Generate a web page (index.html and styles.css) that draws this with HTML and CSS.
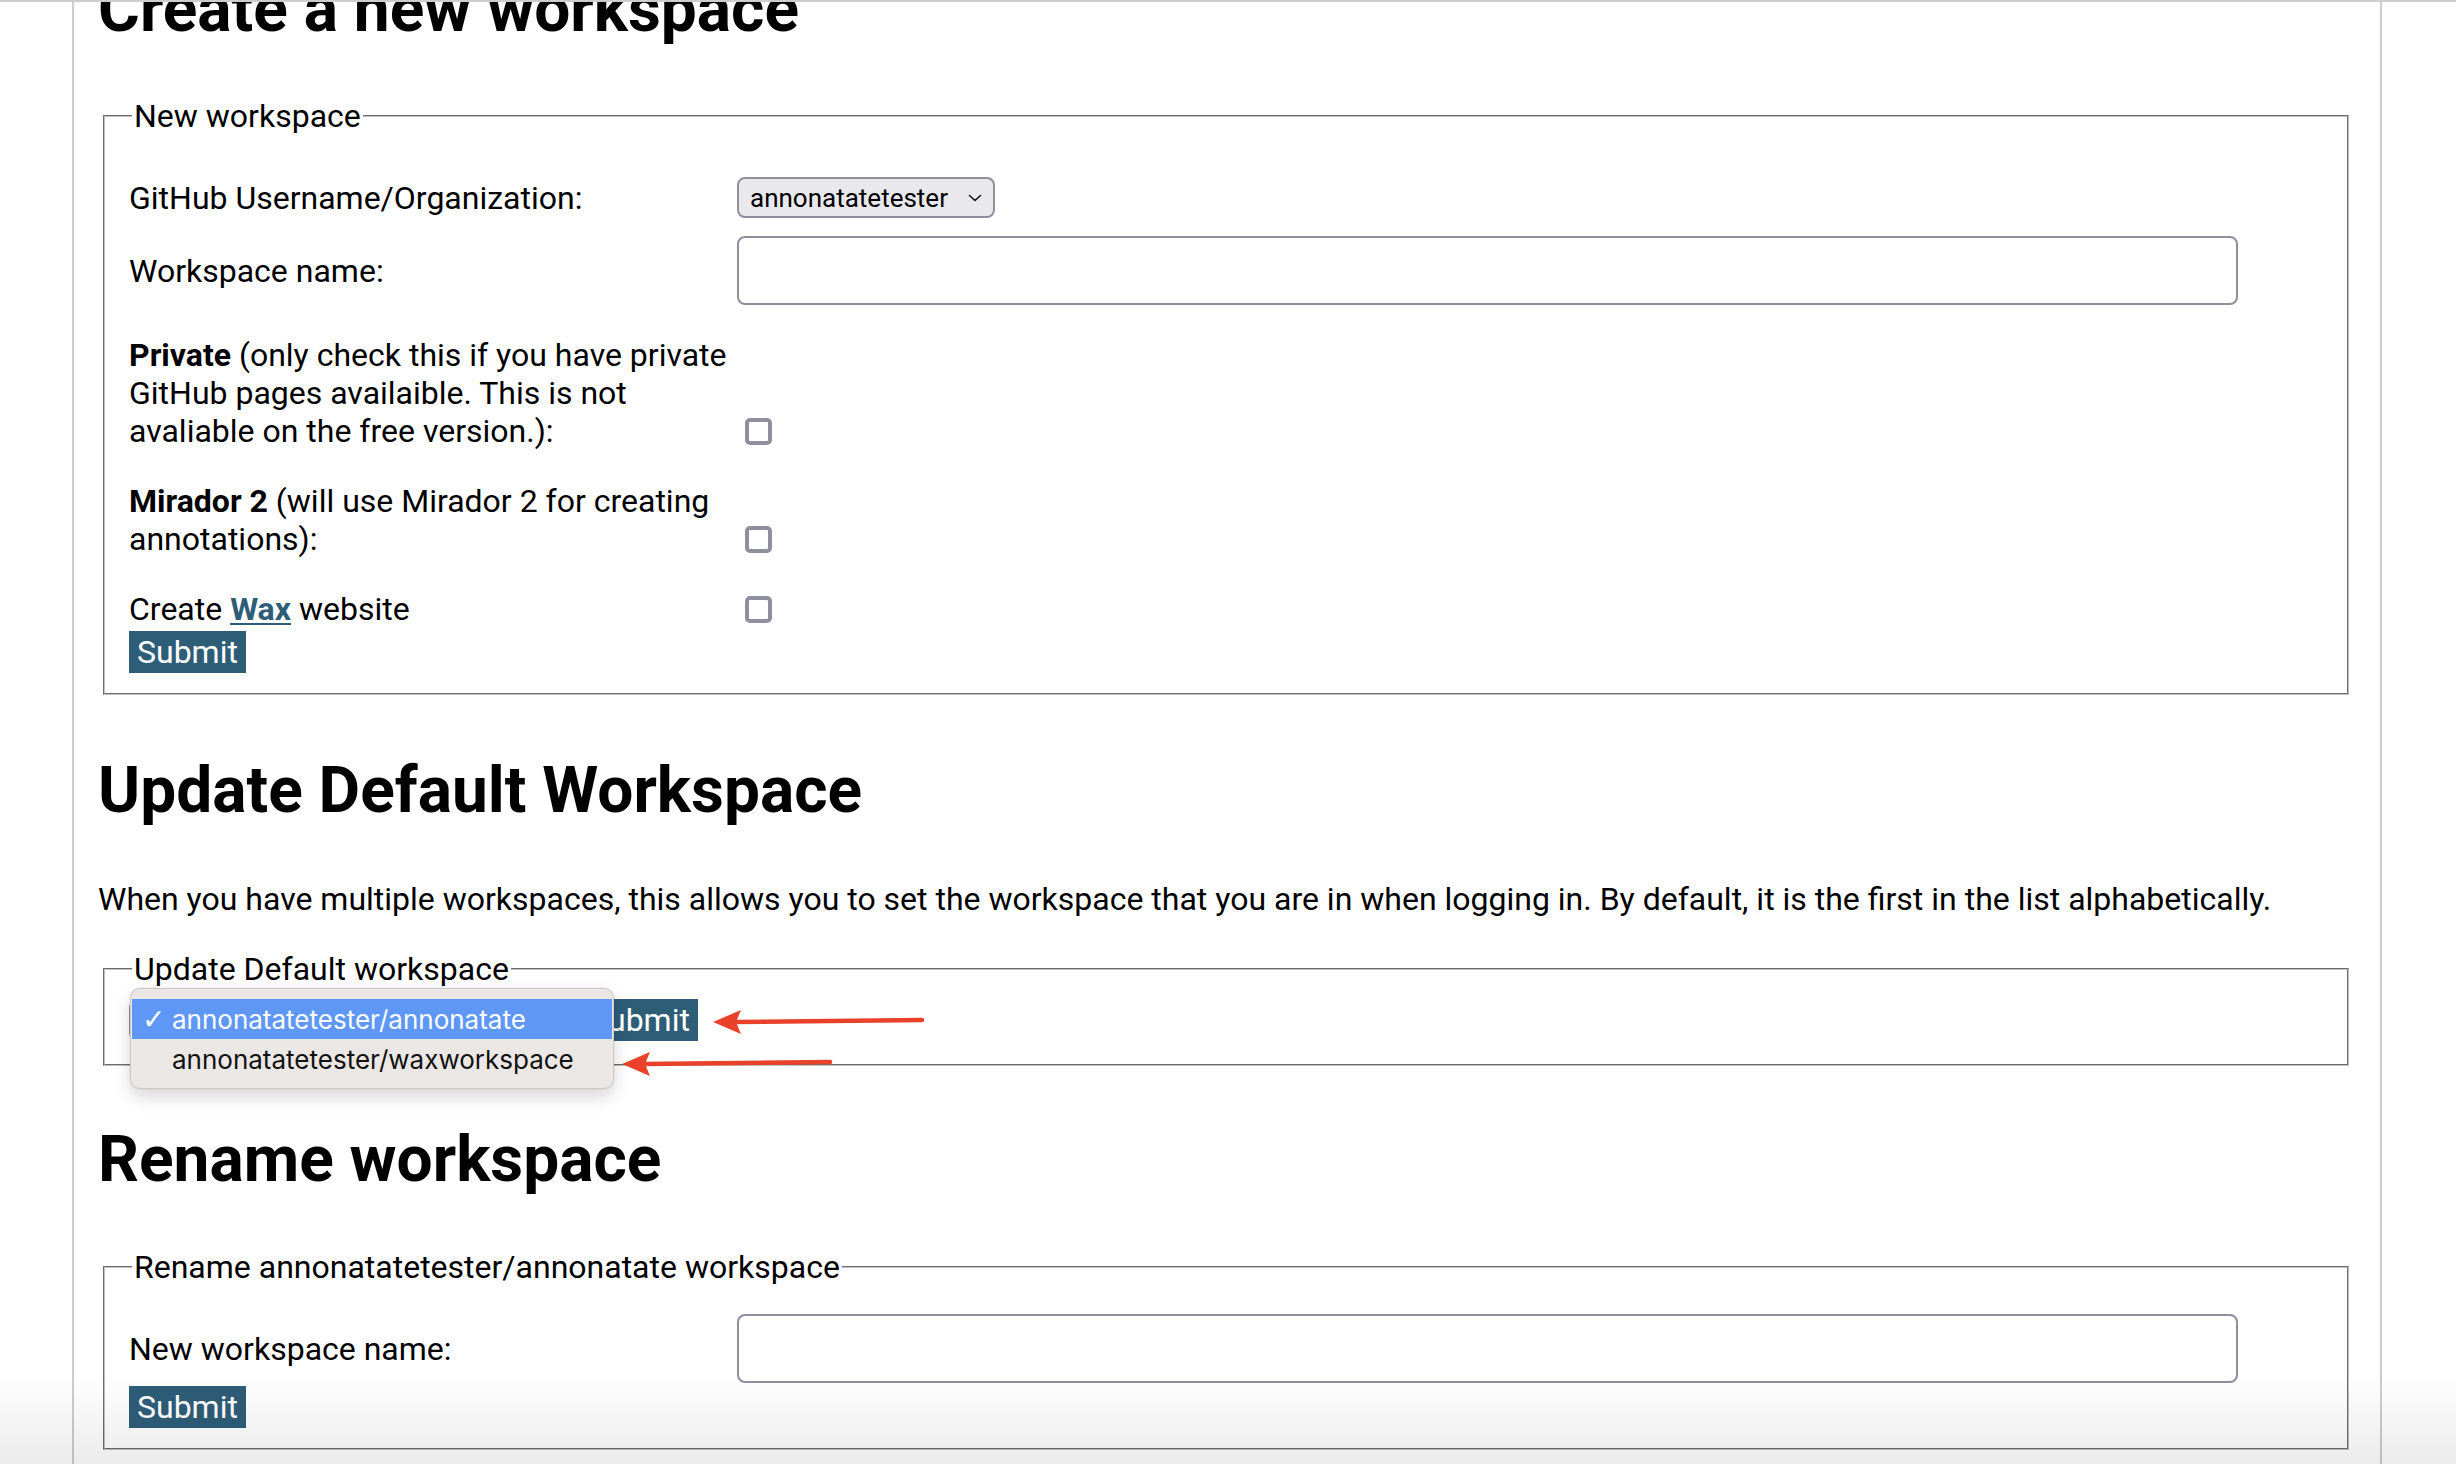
FILE: index.html
```html
<!DOCTYPE html>
<html lang="en">
<head>
<meta charset="utf-8">
<title>Workspaces</title>
<link rel="stylesheet" href="styles.css">
</head>
<body>
<div class="page">
  <h2 class="title title--first">Create a new workspace</h2>
  <fieldset class="box">
    <legend>New workspace</legend>
    <div class="row row--first">
      <label class="lbl">GitHub Username/Organization:</label>
      <div class="select select--org"><span>annonatatetester</span><svg class="chev" viewBox="0 0 14 8" width="14" height="8"><path d="M1.5 1.5 L7 6.5 L12.5 1.5" fill="none" stroke="#111" stroke-width="1.6" stroke-linecap="round" stroke-linejoin="round"/></svg></div>
    </div>
    <div class="row row--input">
      <label class="lbl">Workspace name:</label>
      <input class="text" type="text">
    </div>
    <div class="row row--check row--check-first">
      <label class="lbl"><b>Private</b> (only check this if you have private GitHub pages availaible. This is not avaliable on the free version.):</label>
      <input class="check" type="checkbox">
    </div>
    <div class="row row--check">
      <label class="lbl"><b>Mirador 2</b> (will use Mirador 2 for creating annotations):</label>
      <input class="check" type="checkbox">
    </div>
    <div class="row row--check">
      <label class="lbl">Create <a class="link" href="#">Wax</a> website</label>
      <input class="check" type="checkbox">
    </div>
    <button class="submit" type="button">Submit</button>
  </fieldset>

  <h2 class="title">Update Default Workspace</h2>
  <p class="intro">When you have multiple workspaces, this allows you to set the workspace that you are in when logging in. By default, it is the first in the list alphabetically.</p>
  <fieldset class="box">
    <legend>Update Default workspace</legend>
    <div class="inline">
      <div class="select select--wide"><span>annonatatetester/annonatate</span><svg class="chev" viewBox="0 0 14 8" width="14" height="8"><path d="M1.5 1.5 L7 6.5 L12.5 1.5" fill="none" stroke="#111" stroke-width="1.6" stroke-linecap="round" stroke-linejoin="round"/></svg></div>
      <button class="submit submit--inline" type="button">Submit</button>
      <div class="popup">
        <div class="opt opt--sel"><span class="tick">✓</span>annonatatetester/annonatate</div>
        <div class="opt">annonatatetester/waxworkspace</div>
      </div>
    </div>
  </fieldset>

  <h2 class="title title--rename">Rename workspace</h2>
  <fieldset class="box">
    <legend>Rename annonatatetester/annonatate workspace</legend>
    <div class="row row--rename">
      <label class="lbl">New workspace name:</label>
      <input class="text" type="text">
    </div>
    <button class="submit" type="button">Submit</button>
  </fieldset>
</div>

<svg class="arrows" viewBox="0 0 2456 1464" width="2456" height="1464">
  <line x1="734" y1="1022" x2="922" y2="1020" stroke="#e8432a" stroke-width="4.5" stroke-linecap="round"/>
  <polygon points="713,1022 741,1010 736,1022 741,1034" fill="#e8432a"/>
  <line x1="643" y1="1064" x2="830" y2="1062" stroke="#e8432a" stroke-width="4.5" stroke-linecap="round"/>
  <polygon points="622,1064 650,1052 645,1064 650,1076" fill="#e8432a"/>
</svg>
<div class="shade"></div>
</body>
</html>
```

FILE: styles.css
```css
html, body {
  margin: 0;
  padding: 0;
}

body {
  font-family: Roboto, "Liberation Sans", sans-serif;
  font-size: 32px;
  color: #000;
  background: #fff;
  border-top: 2px solid #cdcdcd;
  position: relative;
  height: 1462px;
  overflow: hidden;
}

.page {
  box-sizing: border-box;
  margin-left: 72px;
  width: 2310px;
  min-height: 1462px;
  border-left: 2px solid #cdcdcd;
  border-right: 2px solid #cdcdcd;
  padding: 0 29px 0 24px;
  overflow: hidden;
}

.title {
  font-size: 64px;
  font-weight: 700;
  line-height: normal;
  margin: 58px 0 52px;
}

.title--first {
  margin-top: -30px;
  margin-bottom: 50px;
}

.title--rename {
  margin: 56px 0 51px;
}

.intro {
  margin: 0 0 32px;
  line-height: normal;
}

.box {
  margin: 0 2px 0 5px;
  border: 2px groove #c0c0c0;
  padding: 11px 24px 20px 24px;
  min-width: 0;
}

.box legend {
  padding: 0 2px;
  margin-left: 3px;
  line-height: normal;
}

.row {
  display: flex;
  align-items: center;
}

.lbl {
  flex: none;
  width: 600px;
  margin-right: 8px;
  line-height: normal;
}

.row--first {
  margin-top: 31px;
}

.row--input {
  margin-top: 18px;
}

.row--check {
  align-items: flex-end;
  margin-top: 32px;
}

.row--check-first {
  margin-top: 31px;
}

.row--rename {
  margin-top: 17px;
}

.select {
  box-sizing: border-box;
  height: 41px;
  background: #e9e9ed;
  border: 2px solid #8f8f9d;
  border-radius: 8px;
  display: flex;
  align-items: center;
  justify-content: space-between;
  padding: 0 11px 0 11px;
  font-size: 26px;
  flex: none;
}

.select--org {
  width: 258px;
}

.select--wide {
  width: 444px;
}

.chev {
  flex: none;
  margin-left: 8px;
}

.text {
  box-sizing: border-box;
  width: 1501px;
  height: 69px;
  border: 2px solid #8f8f9d;
  border-radius: 8px;
  background: #fff;
  margin: 0;
  padding: 0 10px;
  font: inherit;
}

.check {
  -webkit-appearance: none;
  appearance: none;
  box-sizing: border-box;
  width: 27px;
  height: 27px;
  margin: 0 0 5px 8px;
  border: 4px solid #8f8f9d;
  border-radius: 5px;
  background: #fff;
  flex: none;
}

.link {
  color: #2e5d78;
  font-weight: 700;
  text-decoration: underline;
  text-underline-offset: 3px;
  text-decoration-thickness: 2px;
}

.submit {
  display: block;
  margin: 3px 0 0;
  height: 42px;
  padding: 0 8px;
  border: none;
  border-radius: 0;
  background: #2e5d78;
  color: #fff;
  font-family: Roboto, "Liberation Sans", sans-serif;
  font-size: 32px;
  line-height: 42px;
}

.inline {
  position: relative;
  display: flex;
  align-items: center;
  gap: 8px;
  padding-bottom: 3px;
}

.submit--inline {
  margin: 0;
}

.popup {
  position: absolute;
  left: 1px;
  top: -11px;
  box-sizing: border-box;
  width: 484px;
  height: 101px;
  padding: 10px 1px;
  background: #ebe7e5;
  border: 1px solid #cfcac6;
  border-radius: 10px;
  box-shadow: 0 8px 18px rgba(0, 0, 0, 0.16), 0 0 2px rgba(0, 0, 0, 0.12);
  font-family: Inter, "Liberation Sans", sans-serif;
  font-size: 26px;
  color: #111;
}

.opt {
  position: relative;
  height: 40px;
  display: flex;
  align-items: center;
  padding-left: 40px;
}

.opt--sel {
  background: #5e97f5;
  color: #fff;
}

.tick {
  position: absolute;
  left: 10px;
  font-family: "DejaVu Sans", sans-serif;
  font-size: 28px;
}

.arrows {
  position: absolute;
  left: 0;
  top: -2px;
  pointer-events: none;
}

.shade {
  position: absolute;
  left: 0;
  right: 0;
  bottom: 0;
  height: 90px;
  background: linear-gradient(rgba(0, 0, 0, 0), rgba(0, 0, 0, 0.08));
  pointer-events: none;
}
```
